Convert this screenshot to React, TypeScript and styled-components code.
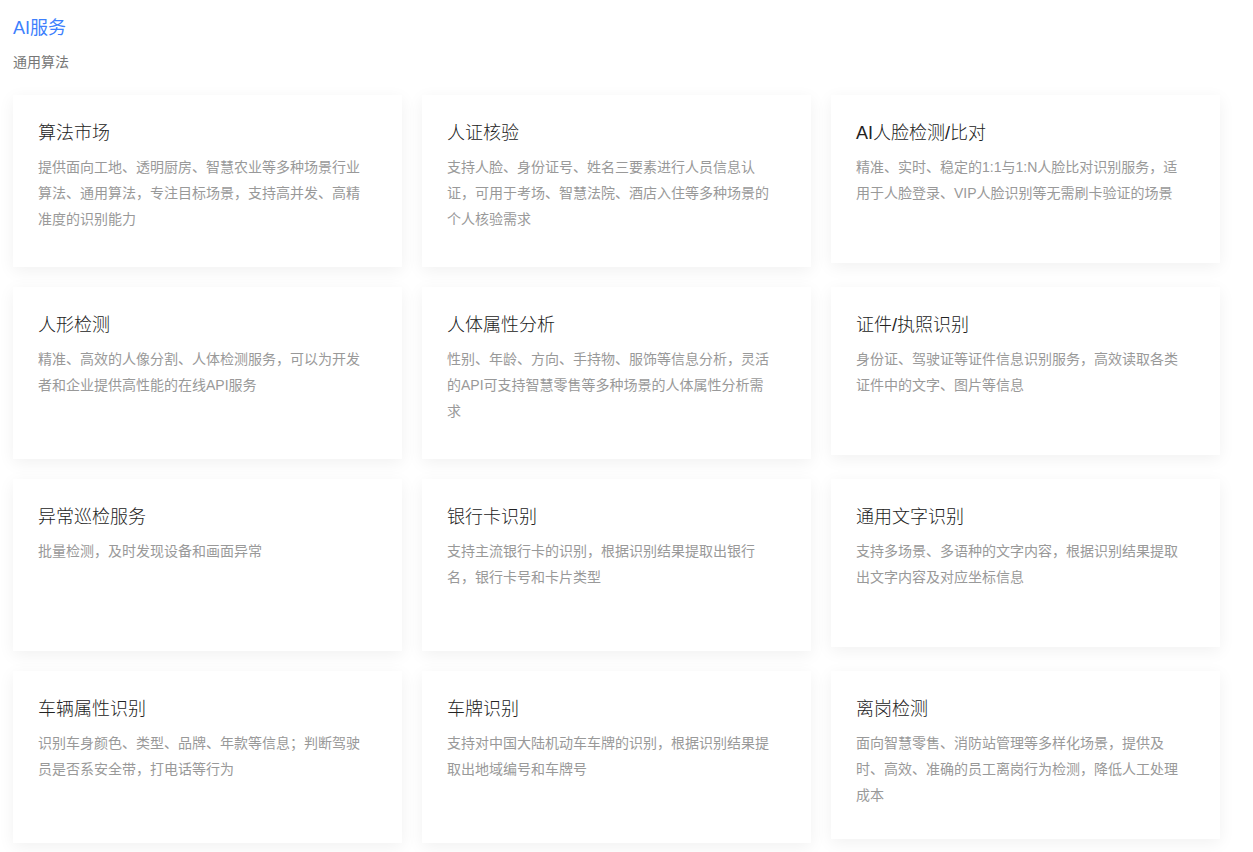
import * as React from 'react';
import styled, { createGlobalStyle } from 'styled-components';

interface Service {
  title: string;
  desc: string;
}

const SERVICES: Service[] = [
  { title: '算法市场', desc: '提供面向工地、透明厨房、智慧农业等多种场景行业算法、通用算法，专注目标场景，支持高并发、高精准度的识别能力' },
  { title: '人证核验', desc: '支持人脸、身份证号、姓名三要素进行人员信息认证，可用于考场、智慧法院、酒店入住等多种场景的个人核验需求' },
  { title: 'AI人脸检测/比对', desc: '精准、实时、稳定的1:1与1:N人脸比对识别服务，适用于人脸登录、VIP人脸识别等无需刷卡验证的场景' },
  { title: '人形检测', desc: '精准、高效的人像分割、人体检测服务，可以为开发者和企业提供高性能的在线API服务' },
  { title: '人体属性分析', desc: '性别、年龄、方向、手持物、服饰等信息分析，灵活的API可支持智慧零售等多种场景的人体属性分析需求' },
  { title: '证件/执照识别', desc: '身份证、驾驶证等证件信息识别服务，高效读取各类证件中的文字、图片等信息' },
  { title: '异常巡检服务', desc: '批量检测，及时发现设备和画面异常' },
  { title: '银行卡识别', desc: '支持主流银行卡的识别，根据识别结果提取出银行名，银行卡号和卡片类型' },
  { title: '通用文字识别', desc: '支持多场景、多语种的文字内容，根据识别结果提取出文字内容及对应坐标信息' },
  { title: '车辆属性识别', desc: '识别车身颜色、类型、品牌、年款等信息；判断驾驶员是否系安全带，打电话等行为' },
  { title: '车牌识别', desc: '支持对中国大陆机动车车牌的识别，根据识别结果提取出地域编号和车牌号' },
  { title: '离岗检测', desc: '面向智慧零售、消防站管理等多样化场景，提供及时、高效、准确的员工离岗行为检测，降低人工处理成本' },
];

const GlobalStyle = createGlobalStyle`
  body {
    margin: 0;
    background: #fff;
    font-family: "Liberation Sans", "Noto Sans CJK SC", sans-serif;
  }
`;

const Page = styled.div`
  padding: 16px 13px 20px 13px;
`;

const Heading = styled.h1`
  margin: 0;
  font-size: 18px;
  line-height: 24px;
  font-weight: 400;
  color: #3d7ffd;
`;

const SubHeading = styled.h2`
  margin: 12px 0 0 0;
  font-size: 14px;
  line-height: 20px;
  font-weight: 400;
  color: #777;
`;

const Grid = styled.div`
  display: grid;
  grid-template-columns: repeat(3, 389px);
  column-gap: 20px;
  row-gap: 20px;
  margin-top: 23px;
  align-items: start;
`;

const Card = styled.div<{ $short: boolean }>`
  height: ${(p) => (p.$short ? 168 : 172)}px;
  box-sizing: border-box;
  padding: 26px 37px 0 25px;
  background: #fff;
  box-shadow: 0 4px 16px rgba(0, 0, 0, 0.06);
`;

const CardTitle = styled.div`
  font-size: 18px;
  line-height: 24px;
  font-weight: 300;
  color: #222;
`;

const CardDesc = styled.p`
  margin: 9px 0 0 0;
  font-size: 14px;
  line-height: 26px;
  color: #999;
`;

export default function App() {
  return (
    <Page>
      <GlobalStyle />
      <Heading>AI服务</Heading>
      <SubHeading>通用算法</SubHeading>
      <Grid>
        {SERVICES.map((s, i) => (
          <Card key={s.title} $short={i % 3 === 2}>
            <CardTitle>{s.title}</CardTitle>
            <CardDesc>{s.desc}</CardDesc>
          </Card>
        ))}
      </Grid>
    </Page>
  );
}
